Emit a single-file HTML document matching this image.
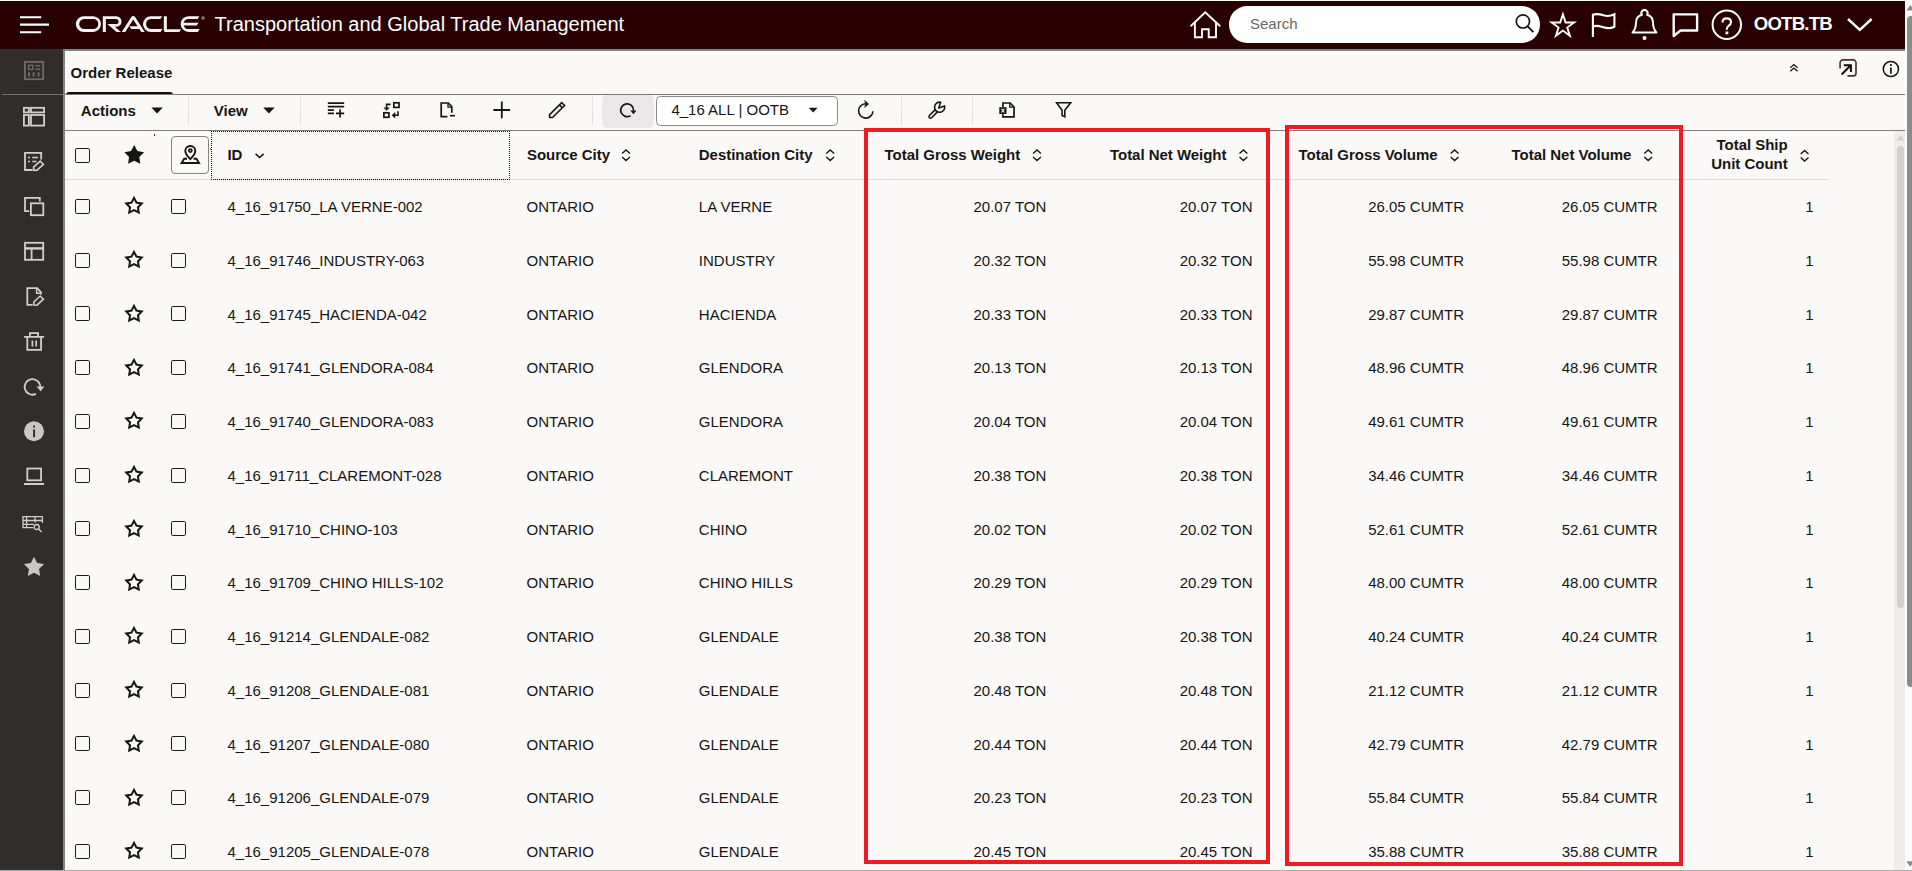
<!DOCTYPE html>
<html lang="en"><head><meta charset="utf-8"><title>Order Release</title>
<style>
html,body{margin:0;padding:0;overflow:hidden;}
body{width:1912px;height:871px;overflow:hidden;position:relative;background:#fbf9f8;
 font-family:"Liberation Sans",sans-serif;color:#161513;font-size:15px;}
*{box-sizing:border-box;}
.abs{position:absolute;}
svg{position:absolute;overflow:visible;}
/* ---- top strip + header bar ---- */
#topline{position:absolute;left:0;top:0;width:1912px;height:1px;background:#fdfdfd;}
#hdr{position:absolute;left:0;top:1px;width:1905px;height:48px;background:#280000;}
#title{position:absolute;left:214.6px;top:11.5px;font-size:20px;line-height:24px;color:#fff;white-space:pre;}
#search{position:absolute;left:1228.5px;top:5.5px;width:1311.5px;height:36.5px;}
#searchbox{position:absolute;left:1228.5px;top:6.3px;width:311.3px;height:36.4px;border-radius:18.2px;background:#fff;}
#searchtxt{position:absolute;left:1250px;top:13.6px;font-size:15px;line-height:20px;color:#6a6866;}
#user{position:absolute;left:1753.8px;top:13.4px;font-size:18.6px;line-height:22px;font-weight:700;color:#fff;letter-spacing:-0.8px;white-space:pre;}
/* ---- sidebar ---- */
#side{position:absolute;left:0;top:49px;width:63px;height:822px;background:#312d2a;}
#sideline{position:absolute;left:2px;top:94px;width:61px;height:1px;background:#77726f;}
#frameL{position:absolute;left:63px;top:49px;width:2px;height:822px;background:#848484;}
#frameT{position:absolute;left:63px;top:49px;width:1842px;height:2px;background:#848484;}
/* ---- page scrollbar ---- */
#pscroll{position:absolute;left:1905px;top:1px;width:7px;height:870px;background:#fcfcfc;overflow:hidden;}
#pthumb{position:absolute;left:2.2px;top:15px;width:12px;height:671px;border-radius:4px;background:#8b8b8b;}
/* ---- tab row ---- */
#tab{position:absolute;left:70.6px;top:62.5px;font-size:15px;line-height:20px;font-weight:700;white-space:pre;}
#tabul{position:absolute;left:65.8px;top:91.6px;width:107.7px;height:3.4px;background:#100f0e;border-radius:3px 3px 0 0;}
#line1{position:absolute;left:65px;top:94px;width:1840px;height:1px;background:#7c7a78;}
#line2{position:absolute;left:65px;top:130px;width:1840px;height:1px;background:#7f7d7b;}
.tb{position:absolute;font-size:15px;line-height:20px;font-weight:700;white-space:pre;}
.vsep{position:absolute;top:97px;height:28px;width:1px;background:repeating-linear-gradient(to bottom,#d6d3d1 0,#d6d3d1 1px,#ebe8e6 1px,#ebe8e6 3px);}
#rbtn{position:absolute;left:602px;top:95.2px;width:52px;height:32.8px;border-radius:5px;background:#e9e7e7;}
#sel{position:absolute;left:656.2px;top:96.3px;width:181.8px;height:29.6px;border:1px solid #8c8a88;border-radius:4.5px;background:#fff;}
#seltxt{position:absolute;left:671.4px;top:99.6px;font-size:15px;line-height:20px;white-space:pre;}
/* ---- column header ---- */
.h{position:absolute;font-size:15px;line-height:19px;font-weight:700;white-space:pre;letter-spacing:-0.03px;}
#hline{position:absolute;left:65px;top:179.4px;width:1764px;height:1px;background:#dedbd9;}
#focus{position:absolute;left:211px;top:130.6px;width:299px;height:49.6px;border:1px dotted #161513;}
#mapbtn{position:absolute;left:171.2px;top:136.2px;width:37.6px;height:37.6px;border:1.2px solid #868482;border-radius:4px;background:#fbf9f8;}
/* ---- rows ---- */
.cb{position:absolute;width:15px;height:15px;border:1.8px solid #1c1a18;border-radius:1.8px;background:#fbf9f8;}
.rstar{left:123.3px;}
.c{position:absolute;font-size:15px;line-height:20px;white-space:pre;}
/* ---- table scrollbar ---- */
#iscroll{position:absolute;left:1894px;top:131px;width:11px;height:739px;background:#efedec;}
#ithumb{position:absolute;left:1897px;top:146px;width:7px;height:461.7px;border-radius:3.5px;background:#d2d0cf;}
/* ---- annotations ---- */
.red{position:absolute;border:4px solid #ec1b24;}
#botline{position:absolute;left:0;top:869.6px;width:1912px;height:1.4px;background:#a9a9a9;}

</style></head>
<body>
<div id="topline"></div>
<div id="hdr"></div>
<!-- hamburger -->
<svg style="left:0;top:0" width="64" height="49" viewBox="0 0 64 49"><g stroke="#fff" stroke-width="2.1" fill="none"><path d="M20 17.3H41.2M20 24.6H49M20 32.3H41.2"/></g></svg>
<!-- ORACLE logotype -->
<svg style="left:75.8px;top:16.4px" width="123.8" height="15.9" viewBox="0 0 231 30" preserveAspectRatio="none"><path fill="#f6f2f2" d="M99.61,19.52h15.24l-8.05-13L92,30H85.27l18-28.17a4.29,4.29,0,0,1,7-.05L128.32,30h-6.73l-3.17-5.25H103l-3.36-5.23m69.93,5.23V0.28h-5.72V27.16a2.76,2.76,0,0,0,.85,2,2.89,2.89,0,0,0,2.08.87h26l3.39-5.25H169.54M75,20.38A10,10,0,0,0,75,.28H50V30h5.71V5.54H74.65a4.81,4.81,0,0,1,0,9.62H58.54L75.6,30h8.29L72.43,20.38H75M14.88,30H32.15a14.86,14.86,0,0,0,0-29.71H14.88a14.86,14.86,0,1,0,0,29.71m16.88-5.23H15.26a9.62,9.62,0,0,1,0-19.23h16.5a9.62,9.62,0,1,1,0,19.23M140.25,30h17.63l3.34-5.23H140.64a9.62,9.62,0,1,1,0-19.23h16.75l3.38-5.25H140.25a14.86,14.86,0,1,0,0,29.71m69.87-5.23a9.62,9.62,0,0,1-9.26-7h24.42l3.36-5.24H200.86a9.61,9.61,0,0,1,9.26-7h16.76l3.35-5.25h-20.5a14.86,14.86,0,0,0,0,29.71h17.63l3.35-5.23h-20.6"/></svg>
<svg style="left:200.6px;top:16.4px" width="4" height="4" viewBox="0 0 4 4"><circle cx="2" cy="2" r="1.3" fill="none" stroke="#cbb" stroke-width="0.8"/></svg>
<div id="title">Transportation and Global Trade Management</div>
<!-- home -->
<svg style="left:1186px;top:6px" width="40" height="36" viewBox="0 0 40 36"><path d="M4.6 20.2 L19.3 6.2 L34.2 20.2 M8.9 16.6 V31.3 H16 V23.3 H22.7 V31.3 H30 V16.6" fill="none" stroke="#fff" stroke-width="1.9" stroke-linejoin="miter"/></svg>
<div id="searchbox"></div>
<div id="searchtxt">Search</div>
<svg style="left:1510px;top:8px" width="30" height="30" viewBox="0 0 30 30"><circle cx="12.9" cy="13.4" r="6.6" fill="none" stroke="#161513" stroke-width="1.7"/><path d="M17.7 18.4 L23.4 24.2" stroke="#161513" stroke-width="1.9" fill="none"/></svg>
<!-- header icons -->
<svg id="hicons" style="left:1545px;top:1px" width="340" height="48" viewBox="1545 1 340 48" fill="none" stroke="#fff" stroke-width="2">
 <path d="M1562.90 11.20 L1566.24 21.50 L1577.07 21.50 L1568.31 27.86 L1571.66 38.15 L1562.90 31.79 L1554.14 38.15 L1557.49 27.86 L1548.73 21.50 L1559.56 21.50Z M1562.90 17.30 L1564.87 23.38 L1571.27 23.38 L1566.10 27.14 L1568.07 33.22 L1562.90 29.46 L1557.73 33.22 L1559.70 27.14 L1554.53 23.38 L1560.93 23.38Z" fill="#fff" fill-rule="evenodd" stroke="none"/>
 <path d="M1592.9 37V14.8C1596.5 13.4 1600 14.2 1603.5 15.3S1610.5 16.2 1614.4 14.3V26.7C1610.5 28.6 1607 28.4 1603.5 27.3S1596.5 25 1592.9 26.4" stroke-width="2.1"/>
 <path d="M1641.9 14.8A3.1 3.1 0 1 1 1647.1 14.8C1651 16 1653 18.6 1653 22.6C1653 27 1653.6 29.4 1656.4 32.5H1632.6C1635.4 29.4 1636 27 1636 22.6C1636 18.6 1638 16 1641.9 14.8Z" stroke-linejoin="round"/>
 <circle cx="1644.5" cy="38" r="2" fill="#fff" stroke="none"/>
 <path d="M1673.7 14.4H1697.1V30.5H1680.6L1673.7 36Z" stroke-width="2.4" stroke-linejoin="round"/>
 <circle cx="1726.8" cy="24.7" r="14.2"/>
 <path d="M1722.5 22.6C1722.5 19.8 1724.4 18.4 1726.8 18.4C1729.4 18.4 1731 20 1731 22.2C1731 24.2 1729.8 25 1728.4 26C1727.2 26.9 1726.8 27.6 1726.8 29.8" stroke-width="2.1"/>
 <rect x="1725.5" y="31.5" width="2.8" height="2.8" fill="#fff" stroke="none"/>
 <path d="M1848 19L1859.8 29.8L1871.6 19" stroke-width="2.4"/>
</svg>
<div id="user">OOTB.TB</div>
<!-- sidebar -->
<div id="side"></div>
<div id="sideline"></div>
<!--SIDE-ICONS--><svg id="sideicons" style="left:0;top:49px" width="63" height="560" viewBox="0 49 63 560" fill="none" stroke="#d3cfcc" stroke-width="1.8">
 <!-- 1 dashboard (disabled) -->
 <g stroke="#6f6a67"><rect x="24.9" y="61.9" width="18.3" height="17.3"/>
 <rect x="28.6" y="65.2" width="4.2" height="4.2" stroke-width="1.4"/><path d="M35.4 65.8H40.2M35.4 69.2H40.2" stroke-width="1.5"/><path d="M29 72.3V76.6M33.6 72.3V76.6M38.6 72.3V76.6" stroke-width="1.9"/></g>
 <!-- 2 panels -->
 <rect x="23.9" y="107.8" width="5" height="4.6"/><rect x="31" y="107.8" width="13.1" height="4.6"/>
 <rect x="23.9" y="115" width="5" height="10.6"/><rect x="31" y="115" width="13.1" height="10.6"/>
 <!-- 3 form edit -->
 <path d="M41.2 159.6V152.9H25V170H32.6"/><path d="M28 157.6H30M32.2 157.6H38M28 161.5H30M32.2 161.5H36.4" stroke-width="1.5"/>
 <path d="M33.6 170.2V167.2L40.2 161.2L43.4 164.4L36.8 170.4Z" stroke-width="1.6" stroke-linejoin="miter"/>
 <!-- 4 copy -->
 <path d="M39.8 201.6V197.8H25V211.2H29.2"/><rect x="30.9" y="203.3" width="12.4" height="11.9"/>
 <!-- 5 layout -->
 <rect x="25" y="242.8" width="18.2" height="17"/><path d="M25 248.4H43.2" stroke-width="2.4"/><path d="M31.6 248.4V259.8"/>
 <!-- 6 doc edit -->
 <path d="M32.6 304.8H27.3V288.2H37.2L41 292.4V294.6"/><path d="M36.6 288.6V293.2H40.8" stroke-width="1.4"/>
 <path d="M33.8 305V302L40.2 296L43.4 299.2L37 305.2Z" stroke-width="1.6" stroke-linejoin="miter"/>
 <!-- 7 trash -->
 <path d="M23.9 336.8H44.1M29.9 336.6V333.2H38.1V336.6M27.3 337V349.8H41.1V337"/><path d="M32.4 340.4V346.6M36.2 340.4V346.6" stroke-width="1.7"/>
 <!-- 8 refresh -->
 <path d="M35.9 393.9A7.8 7.8 0 1 1 40.2 387.6" /><path d="M36.6 386.6L40.6 391.2L44.4 386.6Z" fill="#d3cfcc" stroke="none"/>
 <!-- 9 info -->
 <circle cx="34" cy="431.3" r="10" fill="#cbc7c4" stroke="none"/><path d="M34.1 425.6V427.6M34.1 429.6V437.2" stroke="#312d2a" stroke-width="1.9"/>
 <!-- 10 laptop -->
 <rect x="27.3" y="468.5" width="13.8" height="11.8"/><path d="M23.9 484H44.1" stroke-width="2"/>
 <!-- 11 table search -->
 <g stroke-width="1.3"><path d="M42.4 523V516.6H23V527.6H33.2M23 520.5H42.4M23 524.3H34M26.6 516.6V527.6M35 516.6V522.6"/><circle cx="36.7" cy="527" r="2.5"/><path d="M38.6 529L41.6 532"/></g>
 <!-- 12 star -->
 <path d="M34.00 556.80 L37.12 563.11 L44.08 564.12 L39.04 569.04 L40.23 575.98 L34.00 572.70 L27.77 575.98 L28.96 569.04 L23.92 564.12 L30.88 563.11Z" fill="#cbc7c4" stroke="none"/>
</svg>
<!--/SIDE-ICONS-->
<div id="frameL"></div><div id="frameT"></div>
<!-- page scrollbar -->
<div id="pscroll"><div id="pthumb"></div></div>
<svg style="left:1905px;top:0;overflow:hidden" width="7" height="871" viewBox="1905 0 7 871"><path d="M1906.4 10.6 L1910.4 5 L1914.4 10.6Z M1906.3 861.2 L1910.2 866.8 L1914.1 861.2Z" fill="#8b8b8b"/></svg>
<!-- tab row -->
<div id="tab">Order Release</div>
<div id="tabul"></div>
<div id="line1"></div>
<div id="line2"></div>
<!--TAB-ICONS--><svg style="left:1785px;top:55px" width="118" height="28" viewBox="1785 55 118 28" fill="none" stroke="#161513" stroke-width="1.5">
 <path d="M1790.3 67.8L1793.9 64.6L1797.5 67.8M1790.3 71.2L1793.9 68L1797.5 71.2" stroke-width="1.3"/>
 <path d="M1840.1 68.4V62.6A2.7 2.7 0 0 1 1842.8 59.9H1853.3A2.7 2.7 0 0 1 1856 62.6V73.2A2.7 2.7 0 0 1 1853.3 75.9H1847.4" stroke="#3a3531" stroke-width="1.6"/>
 <path d="M1841.6 74.5L1850.6 65.5M1843.8 65.3H1850.9V72" stroke="#100f0e" stroke-width="2" stroke-linejoin="miter"/>
 <circle cx="1890.9" cy="69" r="7.6"/>
 <path d="M1890.9 64.1V65.9M1890.9 67.6V73.7" stroke-width="1.7"/>
</svg><!--/TAB-ICONS-->
<!-- toolbar -->
<div class="tb" style="left:80.8px;top:101.4px">Actions</div>
<div class="tb" style="left:213.8px;top:101.4px">View</div>
<svg style="left:150px;top:105px" width="130" height="12" viewBox="150 105 130 12"><path d="M151.4 107.4 H162.8 L157.1 113.6Z M263.2 107.4 H274.6 L268.9 113.6Z" fill="#161513"/></svg>
<div class="vsep" style="left:188px"></div>
<div class="vsep" style="left:300px"></div>
<div class="vsep" style="left:592px"></div>
<div class="vsep" style="left:901px"></div>
<div class="vsep" style="left:971.6px"></div>
<div id="rbtn"></div>
<div id="sel"></div>
<div id="seltxt">4_16 ALL | OOTB</div>
<svg style="left:808px;top:106px" width="12" height="8" viewBox="808 106 12 8"><path d="M808.8 107.7 H817.6 L813.2 112.4Z" fill="#161513"/></svg>
<!--TOOLBAR-ICONS--><svg id="tbicons" style="left:320px;top:96px" width="770" height="30" viewBox="320 96 770 30" fill="none" stroke="#161513" stroke-width="1.7">
 <!-- list add -->
 <path d="M327.8 103.2H344.2M327.8 106.7H344.2M327.8 110.1H333.9M327.8 113.3H333.9M336 113.3H344.2M340.1 109.3V117.6"/>
 <!-- swap squares -->
 <rect x="393.8" y="102.8" width="5.2" height="4.6"/><rect x="383.9" y="112.8" width="5" height="4.5"/>
 <path d="M390.6 104.4H386.6V108.4" stroke-width="1.6"/><path d="M383.4 107.4H389.8L386.6 110.8Z" fill="#161513" stroke="none"/>
 <path d="M398 111.2V115.2H394.6" stroke-width="1.6"/><path d="M395.2 111.9V118.5L391.7 115.2Z" fill="#161513" stroke="none"/>
 <!-- doc minus -->
 <path d="M447.4 116.6H441.2V103H448.4L451.8 106.8V112.8" stroke-linejoin="miter"/><path d="M448 103.4V107.2H451.6" stroke-width="1.3"/><path d="M450 115.7H455" stroke-width="1.6"/>
 <!-- plus -->
 <path d="M501.8 101.6V118.2M493.4 110H510.1" stroke-width="1.8"/>
 <!-- pencil -->
 <path d="M549.6 114.6L561.7 102.6L564.6 105.5L552.5 117.5H549.6Z M559.4 104.9L562.3 107.8" stroke-width="1.6" stroke-linejoin="miter"/>
 <!-- refresh in grey button -->
 <path d="M630.6 115.6A6.4 6.4 0 1 1 633.5 110.6"/><path d="M630.3 110.6H636.5L633.4 114.2Z" fill="#161513" stroke="none"/>
 <!-- refresh 2 -->
 <path d="M872.9 111.2A7.15 7.15 0 1 1 865.4 103.8" stroke-width="1.6"/><path d="M864.7 100.5L868.7 104L864.7 107.4L865.6 104Z" fill="#161513" stroke="#161513" stroke-width="0.6" stroke-linejoin="round"/>
 <!-- wrench -->
 <path d="M935 109.9L929.4 115.5A1.55 1.55 0 0 0 931.6 117.7L937.2 112.1" stroke-width="1.6"/><path d="M940.7 102.2L938.7 107.9L944.6 105.9A5.1 5.1 0 1 1 940.7 102.2Z" stroke-width="1.6" stroke-linejoin="round"/>
 <!-- excel doc -->
 <path d="M1002.9 107V103H1010.2L1014 107V116.9H1002.9V114.2" stroke-linejoin="miter"/><path d="M1009.8 103.4V107.2H1013.6" stroke-width="1.3"/>
 <rect x="999.3" y="107.2" width="7.2" height="6.8" fill="#161513" stroke="none"/><path d="M1001.4 108.8L1004.4 112.5M1004.4 108.8L1001.4 112.5" stroke="#fbf9f8" stroke-width="1.1"/>
 <!-- filter -->
 <path d="M1056.6 102.8H1070.7L1064.8 110.2V116.8L1062.1 115.4V110.2Z" stroke-width="1.6" stroke-linejoin="miter"/>
</svg>
<!--/TOOLBAR-ICONS-->
<!-- column header -->
<div id="hline"></div>
<div id="focus"></div>
<span class="cb" style="left:74.6px;top:147.8px"></span>
<svg style="left:123px;top:144px" width="22" height="22" viewBox="123 144 22 22"><path d="M134.20 145.00 L137.37 151.03 L144.09 152.19 L139.34 157.07 L140.31 163.81 L134.20 160.80 L128.09 163.81 L129.06 157.07 L124.31 152.19 L131.03 151.03Z" fill="#161513"/></svg>
<div id="mapbtn"></div>
<div id="dot1" class="abs" style="left:154px;top:134px;width:1px;height:2px;background:#7d1010"></div><div id="dot2" class="abs" style="left:210px;top:148px;width:1px;height:2px;background:#c98a3c"></div>
<!--MAP-ICON--><svg style="left:178px;top:142px" width="26" height="24" viewBox="178 142 26 24" fill="none" stroke="#161513" stroke-width="1.9">
 <path d="M190.3 159.2C186.6 155.4 185.3 153.2 185.3 151A5 5 0 0 1 195.3 151C195.3 153.2 194 155.4 190.3 159.2Z" stroke-linejoin="round"/>
 <circle cx="190.3" cy="150.6" r="1.55" stroke-width="1.7"/>
 <path d="M187 158.8H184.2L181.6 163H199L196.4 158.8H193.6" stroke-linejoin="miter"/>
</svg>
<!--/MAP-ICON-->
<div class="h" style="left:227.4px;top:145px">ID</div>
<svg style="left:254px;top:152px" width="12" height="8" viewBox="254 152 12 8"><path d="M255.6 153.9 L259.6 157.5 L263.6 153.9" fill="none" stroke="#161513" stroke-width="1.5"/></svg>
<div class="h" style="left:527px;top:145px">Source City</div>
<div class="h" style="left:698.8px;top:145px">Destination City</div>
<div class="h" style="left:884.6px;top:145px">Total Gross Weight</div>
<div class="h" style="left:1110px;top:145px">Total Net Weight</div>
<div class="h" style="left:1298.6px;top:145px">Total Gross Volume</div>
<div class="h" style="left:1511.6px;top:145px">Total Net Volume</div>
<div class="h" style="right:124.4px;top:135.4px;text-align:right">Total Ship
Unit Count</div>
<!--SORT-ICONS--><svg style="left:600px;top:146px" width="1240" height="20" viewBox="600 146 1240 20" fill="none" stroke="#161513" stroke-width="1.4"><path d="M622.1 153.5L626.0 150L629.9 153.5M622.1 157L626.0 160.5L629.9 157M826.3 153.5L830.2 150L834.1 153.5M826.3 157L830.2 160.5L834.1 157M1033.1 153.5L1037.0 150L1040.9 153.5M1033.1 157L1037.0 160.5L1040.9 157M1239.5 153.5L1243.4 150L1247.3 153.5M1239.5 157L1243.4 160.5L1247.3 157M1450.7 153.5L1454.6 150L1458.5 153.5M1450.7 157L1454.6 160.5L1458.5 157M1644.3 153.5L1648.2 150L1652.1 153.5M1644.3 157L1648.2 160.5L1652.1 157M1800.7 154L1804.6 150.5L1808.5 154M1800.7 157.5L1804.6 161L1808.5 157.5"/></svg><!--/SORT-ICONS-->
<!-- table scrollbar -->
<div id="iscroll"></div><div id="ithumb"></div>
<svg style="left:1894px;top:131px" width="11" height="12" viewBox="1894 131 11 12"><path d="M1896.6 140.6 L1900.5 134.9 L1904.4 140.6Z" fill="#d2d0cf"/></svg>
<div id="rows">
<div class="row"><span class="cb" style="left:74.6px;top:198.78px"></span><svg class="rstar" style="top:195.38px" width="22" height="22" viewBox="0 0 22 22"><path d="M11.00 0.70 L14.12 6.71 L20.80 7.82 L16.04 12.64 L17.05 19.33 L11.00 16.30 L4.95 19.33 L5.96 12.64 L1.20 7.82 L7.88 6.71Z M11.00 5.10 L12.79 8.53 L16.61 9.18 L13.90 11.94 L14.47 15.77 L11.00 14.05 L7.53 15.77 L8.10 11.94 L5.39 9.18 L9.21 8.53Z" fill="#161513" fill-rule="evenodd"/></svg><span class="cb" style="left:171.3px;top:198.78px"></span><span class="c l" style="left:227.5px;top:197.03px">4_16_91750_LA VERNE-002</span><span class="c l" style="left:526.6px;top:197.03px">ONTARIO</span><span class="c l" style="left:698.8px;top:197.03px">LA VERNE</span><span class="c r" style="right:865.7px;top:197.03px">20.07 TON</span><span class="c r" style="right:659.5px;top:197.03px">20.07 TON</span><span class="c r" style="right:448.0px;top:197.03px">26.05 CUMTR</span><span class="c r" style="right:254.4px;top:197.03px">26.05 CUMTR</span><span class="c r" style="right:98.5px;top:197.03px">1</span></div>
<div class="row"><span class="cb" style="left:74.6px;top:252.53px"></span><svg class="rstar" style="top:249.12px" width="22" height="22" viewBox="0 0 22 22"><path d="M11.00 0.70 L14.12 6.71 L20.80 7.82 L16.04 12.64 L17.05 19.33 L11.00 16.30 L4.95 19.33 L5.96 12.64 L1.20 7.82 L7.88 6.71Z M11.00 5.10 L12.79 8.53 L16.61 9.18 L13.90 11.94 L14.47 15.77 L11.00 14.05 L7.53 15.77 L8.10 11.94 L5.39 9.18 L9.21 8.53Z" fill="#161513" fill-rule="evenodd"/></svg><span class="cb" style="left:171.3px;top:252.53px"></span><span class="c l" style="left:227.5px;top:250.78px">4_16_91746_INDUSTRY-063</span><span class="c l" style="left:526.6px;top:250.78px">ONTARIO</span><span class="c l" style="left:698.8px;top:250.78px">INDUSTRY</span><span class="c r" style="right:865.7px;top:250.78px">20.32 TON</span><span class="c r" style="right:659.5px;top:250.78px">20.32 TON</span><span class="c r" style="right:448.0px;top:250.78px">55.98 CUMTR</span><span class="c r" style="right:254.4px;top:250.78px">55.98 CUMTR</span><span class="c r" style="right:98.5px;top:250.78px">1</span></div>
<div class="row"><span class="cb" style="left:74.6px;top:306.27px"></span><svg class="rstar" style="top:302.88px" width="22" height="22" viewBox="0 0 22 22"><path d="M11.00 0.70 L14.12 6.71 L20.80 7.82 L16.04 12.64 L17.05 19.33 L11.00 16.30 L4.95 19.33 L5.96 12.64 L1.20 7.82 L7.88 6.71Z M11.00 5.10 L12.79 8.53 L16.61 9.18 L13.90 11.94 L14.47 15.77 L11.00 14.05 L7.53 15.77 L8.10 11.94 L5.39 9.18 L9.21 8.53Z" fill="#161513" fill-rule="evenodd"/></svg><span class="cb" style="left:171.3px;top:306.27px"></span><span class="c l" style="left:227.5px;top:304.52px">4_16_91745_HACIENDA-042</span><span class="c l" style="left:526.6px;top:304.52px">ONTARIO</span><span class="c l" style="left:698.8px;top:304.52px">HACIENDA</span><span class="c r" style="right:865.7px;top:304.52px">20.33 TON</span><span class="c r" style="right:659.5px;top:304.52px">20.33 TON</span><span class="c r" style="right:448.0px;top:304.52px">29.87 CUMTR</span><span class="c r" style="right:254.4px;top:304.52px">29.87 CUMTR</span><span class="c r" style="right:98.5px;top:304.52px">1</span></div>
<div class="row"><span class="cb" style="left:74.6px;top:360.02px"></span><svg class="rstar" style="top:356.62px" width="22" height="22" viewBox="0 0 22 22"><path d="M11.00 0.70 L14.12 6.71 L20.80 7.82 L16.04 12.64 L17.05 19.33 L11.00 16.30 L4.95 19.33 L5.96 12.64 L1.20 7.82 L7.88 6.71Z M11.00 5.10 L12.79 8.53 L16.61 9.18 L13.90 11.94 L14.47 15.77 L11.00 14.05 L7.53 15.77 L8.10 11.94 L5.39 9.18 L9.21 8.53Z" fill="#161513" fill-rule="evenodd"/></svg><span class="cb" style="left:171.3px;top:360.02px"></span><span class="c l" style="left:227.5px;top:358.27px">4_16_91741_GLENDORA-084</span><span class="c l" style="left:526.6px;top:358.27px">ONTARIO</span><span class="c l" style="left:698.8px;top:358.27px">GLENDORA</span><span class="c r" style="right:865.7px;top:358.27px">20.13 TON</span><span class="c r" style="right:659.5px;top:358.27px">20.13 TON</span><span class="c r" style="right:448.0px;top:358.27px">48.96 CUMTR</span><span class="c r" style="right:254.4px;top:358.27px">48.96 CUMTR</span><span class="c r" style="right:98.5px;top:358.27px">1</span></div>
<div class="row"><span class="cb" style="left:74.6px;top:413.77px"></span><svg class="rstar" style="top:410.38px" width="22" height="22" viewBox="0 0 22 22"><path d="M11.00 0.70 L14.12 6.71 L20.80 7.82 L16.04 12.64 L17.05 19.33 L11.00 16.30 L4.95 19.33 L5.96 12.64 L1.20 7.82 L7.88 6.71Z M11.00 5.10 L12.79 8.53 L16.61 9.18 L13.90 11.94 L14.47 15.77 L11.00 14.05 L7.53 15.77 L8.10 11.94 L5.39 9.18 L9.21 8.53Z" fill="#161513" fill-rule="evenodd"/></svg><span class="cb" style="left:171.3px;top:413.77px"></span><span class="c l" style="left:227.5px;top:412.02px">4_16_91740_GLENDORA-083</span><span class="c l" style="left:526.6px;top:412.02px">ONTARIO</span><span class="c l" style="left:698.8px;top:412.02px">GLENDORA</span><span class="c r" style="right:865.7px;top:412.02px">20.04 TON</span><span class="c r" style="right:659.5px;top:412.02px">20.04 TON</span><span class="c r" style="right:448.0px;top:412.02px">49.61 CUMTR</span><span class="c r" style="right:254.4px;top:412.02px">49.61 CUMTR</span><span class="c r" style="right:98.5px;top:412.02px">1</span></div>
<div class="row"><span class="cb" style="left:74.6px;top:467.52px"></span><svg class="rstar" style="top:464.12px" width="22" height="22" viewBox="0 0 22 22"><path d="M11.00 0.70 L14.12 6.71 L20.80 7.82 L16.04 12.64 L17.05 19.33 L11.00 16.30 L4.95 19.33 L5.96 12.64 L1.20 7.82 L7.88 6.71Z M11.00 5.10 L12.79 8.53 L16.61 9.18 L13.90 11.94 L14.47 15.77 L11.00 14.05 L7.53 15.77 L8.10 11.94 L5.39 9.18 L9.21 8.53Z" fill="#161513" fill-rule="evenodd"/></svg><span class="cb" style="left:171.3px;top:467.52px"></span><span class="c l" style="left:227.5px;top:465.77px">4_16_91711_CLAREMONT-028</span><span class="c l" style="left:526.6px;top:465.77px">ONTARIO</span><span class="c l" style="left:698.8px;top:465.77px">CLAREMONT</span><span class="c r" style="right:865.7px;top:465.77px">20.38 TON</span><span class="c r" style="right:659.5px;top:465.77px">20.38 TON</span><span class="c r" style="right:448.0px;top:465.77px">34.46 CUMTR</span><span class="c r" style="right:254.4px;top:465.77px">34.46 CUMTR</span><span class="c r" style="right:98.5px;top:465.77px">1</span></div>
<div class="row"><span class="cb" style="left:74.6px;top:521.27px"></span><svg class="rstar" style="top:517.88px" width="22" height="22" viewBox="0 0 22 22"><path d="M11.00 0.70 L14.12 6.71 L20.80 7.82 L16.04 12.64 L17.05 19.33 L11.00 16.30 L4.95 19.33 L5.96 12.64 L1.20 7.82 L7.88 6.71Z M11.00 5.10 L12.79 8.53 L16.61 9.18 L13.90 11.94 L14.47 15.77 L11.00 14.05 L7.53 15.77 L8.10 11.94 L5.39 9.18 L9.21 8.53Z" fill="#161513" fill-rule="evenodd"/></svg><span class="cb" style="left:171.3px;top:521.27px"></span><span class="c l" style="left:227.5px;top:519.52px">4_16_91710_CHINO-103</span><span class="c l" style="left:526.6px;top:519.52px">ONTARIO</span><span class="c l" style="left:698.8px;top:519.52px">CHINO</span><span class="c r" style="right:865.7px;top:519.52px">20.02 TON</span><span class="c r" style="right:659.5px;top:519.52px">20.02 TON</span><span class="c r" style="right:448.0px;top:519.52px">52.61 CUMTR</span><span class="c r" style="right:254.4px;top:519.52px">52.61 CUMTR</span><span class="c r" style="right:98.5px;top:519.52px">1</span></div>
<div class="row"><span class="cb" style="left:74.6px;top:575.02px"></span><svg class="rstar" style="top:571.62px" width="22" height="22" viewBox="0 0 22 22"><path d="M11.00 0.70 L14.12 6.71 L20.80 7.82 L16.04 12.64 L17.05 19.33 L11.00 16.30 L4.95 19.33 L5.96 12.64 L1.20 7.82 L7.88 6.71Z M11.00 5.10 L12.79 8.53 L16.61 9.18 L13.90 11.94 L14.47 15.77 L11.00 14.05 L7.53 15.77 L8.10 11.94 L5.39 9.18 L9.21 8.53Z" fill="#161513" fill-rule="evenodd"/></svg><span class="cb" style="left:171.3px;top:575.02px"></span><span class="c l" style="left:227.5px;top:573.27px">4_16_91709_CHINO HILLS-102</span><span class="c l" style="left:526.6px;top:573.27px">ONTARIO</span><span class="c l" style="left:698.8px;top:573.27px">CHINO HILLS</span><span class="c r" style="right:865.7px;top:573.27px">20.29 TON</span><span class="c r" style="right:659.5px;top:573.27px">20.29 TON</span><span class="c r" style="right:448.0px;top:573.27px">48.00 CUMTR</span><span class="c r" style="right:254.4px;top:573.27px">48.00 CUMTR</span><span class="c r" style="right:98.5px;top:573.27px">1</span></div>
<div class="row"><span class="cb" style="left:74.6px;top:628.77px"></span><svg class="rstar" style="top:625.38px" width="22" height="22" viewBox="0 0 22 22"><path d="M11.00 0.70 L14.12 6.71 L20.80 7.82 L16.04 12.64 L17.05 19.33 L11.00 16.30 L4.95 19.33 L5.96 12.64 L1.20 7.82 L7.88 6.71Z M11.00 5.10 L12.79 8.53 L16.61 9.18 L13.90 11.94 L14.47 15.77 L11.00 14.05 L7.53 15.77 L8.10 11.94 L5.39 9.18 L9.21 8.53Z" fill="#161513" fill-rule="evenodd"/></svg><span class="cb" style="left:171.3px;top:628.77px"></span><span class="c l" style="left:227.5px;top:627.02px">4_16_91214_GLENDALE-082</span><span class="c l" style="left:526.6px;top:627.02px">ONTARIO</span><span class="c l" style="left:698.8px;top:627.02px">GLENDALE</span><span class="c r" style="right:865.7px;top:627.02px">20.38 TON</span><span class="c r" style="right:659.5px;top:627.02px">20.38 TON</span><span class="c r" style="right:448.0px;top:627.02px">40.24 CUMTR</span><span class="c r" style="right:254.4px;top:627.02px">40.24 CUMTR</span><span class="c r" style="right:98.5px;top:627.02px">1</span></div>
<div class="row"><span class="cb" style="left:74.6px;top:682.52px"></span><svg class="rstar" style="top:679.12px" width="22" height="22" viewBox="0 0 22 22"><path d="M11.00 0.70 L14.12 6.71 L20.80 7.82 L16.04 12.64 L17.05 19.33 L11.00 16.30 L4.95 19.33 L5.96 12.64 L1.20 7.82 L7.88 6.71Z M11.00 5.10 L12.79 8.53 L16.61 9.18 L13.90 11.94 L14.47 15.77 L11.00 14.05 L7.53 15.77 L8.10 11.94 L5.39 9.18 L9.21 8.53Z" fill="#161513" fill-rule="evenodd"/></svg><span class="cb" style="left:171.3px;top:682.52px"></span><span class="c l" style="left:227.5px;top:680.77px">4_16_91208_GLENDALE-081</span><span class="c l" style="left:526.6px;top:680.77px">ONTARIO</span><span class="c l" style="left:698.8px;top:680.77px">GLENDALE</span><span class="c r" style="right:865.7px;top:680.77px">20.48 TON</span><span class="c r" style="right:659.5px;top:680.77px">20.48 TON</span><span class="c r" style="right:448.0px;top:680.77px">21.12 CUMTR</span><span class="c r" style="right:254.4px;top:680.77px">21.12 CUMTR</span><span class="c r" style="right:98.5px;top:680.77px">1</span></div>
<div class="row"><span class="cb" style="left:74.6px;top:736.27px"></span><svg class="rstar" style="top:732.88px" width="22" height="22" viewBox="0 0 22 22"><path d="M11.00 0.70 L14.12 6.71 L20.80 7.82 L16.04 12.64 L17.05 19.33 L11.00 16.30 L4.95 19.33 L5.96 12.64 L1.20 7.82 L7.88 6.71Z M11.00 5.10 L12.79 8.53 L16.61 9.18 L13.90 11.94 L14.47 15.77 L11.00 14.05 L7.53 15.77 L8.10 11.94 L5.39 9.18 L9.21 8.53Z" fill="#161513" fill-rule="evenodd"/></svg><span class="cb" style="left:171.3px;top:736.27px"></span><span class="c l" style="left:227.5px;top:734.52px">4_16_91207_GLENDALE-080</span><span class="c l" style="left:526.6px;top:734.52px">ONTARIO</span><span class="c l" style="left:698.8px;top:734.52px">GLENDALE</span><span class="c r" style="right:865.7px;top:734.52px">20.44 TON</span><span class="c r" style="right:659.5px;top:734.52px">20.44 TON</span><span class="c r" style="right:448.0px;top:734.52px">42.79 CUMTR</span><span class="c r" style="right:254.4px;top:734.52px">42.79 CUMTR</span><span class="c r" style="right:98.5px;top:734.52px">1</span></div>
<div class="row"><span class="cb" style="left:74.6px;top:790.02px"></span><svg class="rstar" style="top:786.62px" width="22" height="22" viewBox="0 0 22 22"><path d="M11.00 0.70 L14.12 6.71 L20.80 7.82 L16.04 12.64 L17.05 19.33 L11.00 16.30 L4.95 19.33 L5.96 12.64 L1.20 7.82 L7.88 6.71Z M11.00 5.10 L12.79 8.53 L16.61 9.18 L13.90 11.94 L14.47 15.77 L11.00 14.05 L7.53 15.77 L8.10 11.94 L5.39 9.18 L9.21 8.53Z" fill="#161513" fill-rule="evenodd"/></svg><span class="cb" style="left:171.3px;top:790.02px"></span><span class="c l" style="left:227.5px;top:788.27px">4_16_91206_GLENDALE-079</span><span class="c l" style="left:526.6px;top:788.27px">ONTARIO</span><span class="c l" style="left:698.8px;top:788.27px">GLENDALE</span><span class="c r" style="right:865.7px;top:788.27px">20.23 TON</span><span class="c r" style="right:659.5px;top:788.27px">20.23 TON</span><span class="c r" style="right:448.0px;top:788.27px">55.84 CUMTR</span><span class="c r" style="right:254.4px;top:788.27px">55.84 CUMTR</span><span class="c r" style="right:98.5px;top:788.27px">1</span></div>
<div class="row"><span class="cb" style="left:74.6px;top:843.77px"></span><svg class="rstar" style="top:840.38px" width="22" height="22" viewBox="0 0 22 22"><path d="M11.00 0.70 L14.12 6.71 L20.80 7.82 L16.04 12.64 L17.05 19.33 L11.00 16.30 L4.95 19.33 L5.96 12.64 L1.20 7.82 L7.88 6.71Z M11.00 5.10 L12.79 8.53 L16.61 9.18 L13.90 11.94 L14.47 15.77 L11.00 14.05 L7.53 15.77 L8.10 11.94 L5.39 9.18 L9.21 8.53Z" fill="#161513" fill-rule="evenodd"/></svg><span class="cb" style="left:171.3px;top:843.77px"></span><span class="c l" style="left:227.5px;top:842.02px">4_16_91205_GLENDALE-078</span><span class="c l" style="left:526.6px;top:842.02px">ONTARIO</span><span class="c l" style="left:698.8px;top:842.02px">GLENDALE</span><span class="c r" style="right:865.7px;top:842.02px">20.45 TON</span><span class="c r" style="right:659.5px;top:842.02px">20.45 TON</span><span class="c r" style="right:448.0px;top:842.02px">35.88 CUMTR</span><span class="c r" style="right:254.4px;top:842.02px">35.88 CUMTR</span><span class="c r" style="right:98.5px;top:842.02px">1</span></div>
</div>
<!-- highlight annotations -->
<div class="red" style="left:864.2px;top:128.2px;width:405.8px;height:736px"></div>
<div class="red" style="left:1285.4px;top:125.2px;width:397.2px;height:740.4px"></div>
<div id="botline"></div>
</body></html>
